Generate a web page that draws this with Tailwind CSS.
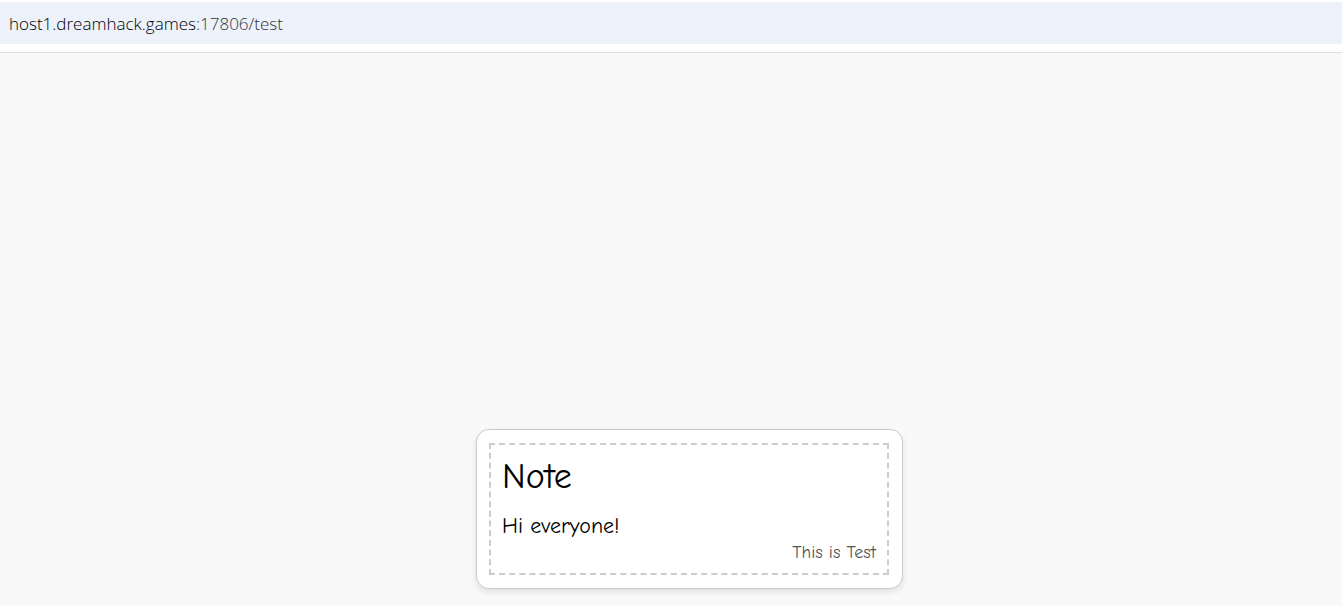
<!DOCTYPE html>
<html lang="en">
<head>
<meta charset="utf-8">
<meta name="viewport" content="width=device-width, initial-scale=1">
<title>Note</title>
<script src="https://cdn.jsdelivr.net/npm/@tailwindcss/browser@4"></script>
</head>
<body class="flex min-h-screen flex-col bg-[#f9f9f9]">
  <header class="border-b border-[#dedede] bg-white pt-0.5 pb-2">
    <div class="flex h-[42px] items-center bg-[#ecf1fa] px-[9px] pt-px">
      <a href="/test" class="font-['Segoe_UI','Open_Sans',sans-serif] text-[17px] leading-6 font-light text-[#303338]"><span class="text-black">host1.dreamhack.games</span>:17806/test</a>
    </div>
  </header>
  <main class="flex flex-1 items-end justify-center pb-[17px] pl-[37px]">
    <article class="w-[427px] rounded-[13px] border border-[#cccccc] bg-white py-[13px] pr-[13px] pl-3 font-['Comic_Sans_MS','Comic_Neue','Open_Sans',sans-serif] shadow-[0_3px_6px_rgba(0,0,0,0.1)] [font-variant-ligatures:none]">
      <div class="border-2 border-dashed border-[#cccccc] px-[11px] pt-3 pb-2">
        <h1 class="text-[36px] leading-10 font-normal text-black">Note</h1>
        <p class="mt-4 text-[22px] leading-[26px] text-black">Hi everyone!</p>
        <p class="mt-0.5 text-right text-[18px] leading-6 font-medium text-[#555555]">This is Test</p>
      </div>
    </article>
  </main>
</body>
</html>
